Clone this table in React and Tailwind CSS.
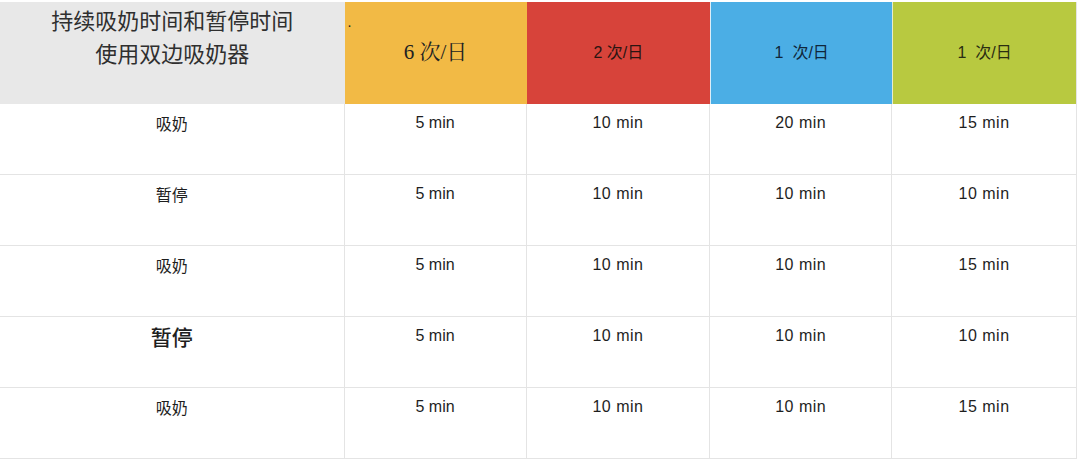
import React from 'react';

const rows = [
  { label: '吸奶', big: false, values: ['5 min', '10 min', '20 min', '15 min'] },
  { label: '暂停', big: false, values: ['5 min', '10 min', '10 min', '10 min'] },
  { label: '吸奶', big: false, values: ['5 min', '10 min', '10 min', '15 min'] },
  { label: '暂停', big: true, values: ['5 min', '10 min', '10 min', '10 min'] },
  { label: '吸奶', big: false, values: ['5 min', '10 min', '10 min', '15 min'] },
];

const widths = ['w-[182px]', 'w-[184px]', 'w-[182px]', 'w-[184px]'];

const sans = "font-['Liberation_Sans','Noto_Sans_CJK_SC',sans-serif]";

export default function App() {
  return (
    <div className="w-[1080px] h-[462px] bg-white pt-[2px]">
      <div className="w-[1077px] border-r border-[#e4e4e4]">
        {/* Header */}
        <div className="flex h-[102px]">
          <div className="w-[345px] bg-[#e8e8e8] text-[#2f2f2f] text-[22px] leading-[33px] text-center pt-[1px] font-['Noto_Sans_CJK_SC',sans-serif]">
            <div>持续吸奶时间和暂停时间</div>
            <div>使用双边吸奶器</div>
          </div>
          <div className="relative w-[182px] bg-[#f2ba45] flex items-center justify-center text-[21px] text-[#222] font-['Liberation_Serif','Noto_Serif_CJK_SC','Noto_Sans_CJK_SC',serif]">
            <span className="absolute left-[3px] top-[14px] text-[14px] leading-none">.</span>
            6 次/日
          </div>
          <div className={`w-[184px] bg-[#d7433a] flex items-center justify-center text-[16px] text-[#2a1512] ${sans}`}>
            2 次/日
          </div>
          <div className={`w-[182px] border-l border-[#dceef8] bg-[#4baee5] flex items-center justify-center text-[16px] text-[#10263a] ${sans}`}>
            1&nbsp; 次/日
          </div>
          <div className={`w-[184px] border-l border-[#e6ecd0] bg-[#b8c940] flex items-center justify-center text-[16px] text-[#2a2d12] ${sans}`}>
            1&nbsp; 次/日
          </div>
        </div>

        {/* Body */}
        {rows.map((row, i) => (
          <div key={i} className={`flex h-[71px] border-b border-[#e4e4e4] ${i === 0 ? 'h-[70px]' : ''}`}>
            <div className="w-[345px] border-r border-[#e4e4e4] text-center text-[#1e1e1e] font-['Noto_Sans_CJK_SC',sans-serif]">
              {row.big ? (
                <div className="pt-[4px] text-[21px] leading-[30px] font-medium">{row.label}</div>
              ) : (
                <div className="pt-[7px] text-[16px] leading-[24px]">{row.label}</div>
              )}
            </div>
            {row.values.map((v, j) => (
              <div
                key={j}
                className={`${widths[j]} ${j < 3 ? 'border-r border-[#e4e4e4]' : ''} text-center pt-[7px] text-[16px] leading-[24px] text-[#1e1e1e] ${j > 0 ? 'tracking-[0.5px]' : ''} ${sans}`}
              >
                {v}
              </div>
            ))}
          </div>
        ))}
      </div>
    </div>
  );
}
